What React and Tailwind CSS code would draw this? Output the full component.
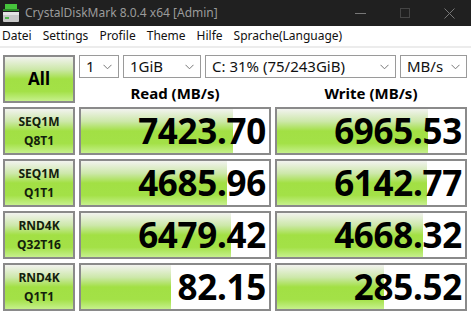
import React from 'react';

const rows = [
  { a: 'SEQ1M', b: 'Q8T1', read: 7423.7, write: 6965.53 },
  { a: 'SEQ1M', b: 'Q1T1', read: 4685.96, write: 6142.77 },
  { a: 'RND4K', b: 'Q32T16', read: 6479.42, write: 4668.32 },
  { a: 'RND4K', b: 'Q1T1', read: 82.15, write: 285.52 },
];

function barPct(v) {
  const f = 0.48 + 0.169 * (Math.log10(v) - 1.915);
  return Math.max(0, Math.min(1, f)) * 100;
}

const green =
  'bg-[linear-gradient(to_bottom,#f2f3ef_0%,#cde8aa_28%,#a2e044_50%,#a3e147_78%,#c6f08c_100%)]';

function Select({ value, className }) {
  return (
    <div className={`h-[23px] flex items-center justify-between border border-[#9a9a9a] bg-white pl-[6px] pr-[6px] text-[15px] text-[#111] leading-none ${className}`}>
      <span>{value}</span>
      <svg width="9" height="6" viewBox="0 0 9 6" className="text-[#777]">
        <path d="M0.5 0.8 L4.5 4.8 L8.5 0.8" fill="none" stroke="currentColor" strokeWidth="1" />
      </svg>
    </div>
  );
}

function Label({ a, b }) {
  return (
    <div className={`border-2 border-[#8a8a8a] ${green} flex flex-col items-center justify-center text-[12px] font-bold leading-[19px] text-[#13200c]`}>
      <span>{a}</span>
      <span>{b}</span>
    </div>
  );
}

function Value({ v }) {
  return (
    <div className="relative border-2 border-[#8a8a8a] bg-white overflow-hidden">
      <div className={`absolute left-0 top-0 bottom-0 ${green}`} style={{ width: `${barPct(v)}%` }} />
      <div className="relative h-full flex items-center justify-end pr-[3px] text-[35px] font-bold text-black tracking-[-0.3px]">
        {v.toFixed(2)}
      </div>
    </div>
  );
}

export default function App() {
  return (
    <div className="w-[471px] h-[315px] bg-white overflow-hidden flex flex-col" style={{ fontFamily: '"Noto Sans", "Open Sans", sans-serif' }}>
      {/* title bar */}
      <div className="h-[26px] bg-[#202020] flex items-center shrink-0">
        <svg width="16" height="18" viewBox="0 0 16 18" className="ml-[3px]">
          <rect x="2" y="0" width="12" height="5" fill="#46c43c" />
          <rect x="0" y="5" width="16" height="2" fill="#2e8a2a" />
          <rect x="0" y="8" width="16" height="10" rx="1" fill="#c8c8c8" />
          <rect x="0" y="8" width="16" height="3" fill="#e4e4e4" />
          <rect x="2" y="13" width="4" height="2" fill="#4fb84a" />
        </svg>
        <span className="ml-[6px] text-[12px] text-[#9b9b9b]">CrystalDiskMark 8.0.4 x64 [Admin]</span>
        <div className="ml-auto flex items-center">
          <div className="w-[46px] flex justify-center">
            <div className="w-[11px] h-px bg-[#777]" />
          </div>
          <div className="w-[44px] flex justify-center">
            <div className="w-[10px] h-[10px] border border-[#444]" />
          </div>
          <div className="w-[44px] flex justify-center">
            <svg width="11" height="11" viewBox="0 0 11 11">
              <path d="M0.5 0.5 L10.5 10.5 M10.5 0.5 L0.5 10.5" stroke="#777" strokeWidth="1" />
            </svg>
          </div>
        </div>
      </div>

      {/* menu */}
      <div className="h-[20px] flex items-center gap-[11px] pl-[2px] text-[12px] text-[#111] shrink-0">
        <span>Datei</span>
        <span>Settings</span>
        <span>Profile</span>
        <span>Theme</span>
        <span>Hilfe</span>
        <span>Sprache(Language)</span>
      </div>
      <div className="h-[2px] bg-[#ececec] shrink-0" />

      {/* main grid */}
      <div className="mt-[7px] ml-[3px] grid grid-cols-[72px_192px_192px] grid-rows-[48px_48px_48px_48px_48px] gap-x-[4px] gap-y-[4px]">
        <div className={`border-2 border-[#8a8a8a] ${green} flex items-center justify-center text-[17px] font-bold text-black`}>
          All
        </div>
        <div className="col-span-2 flex flex-col">
          <div className="flex gap-[4px]">
            <Select value="1" className="w-[40px]" />
            <Select value="1GiB" className="w-[78px]" />
            <Select value="C: 31% (75/243GiB)" className="w-[191px]" />
            <Select value="MB/s" className="w-[67px]" />
          </div>
          <div className="flex mt-[6px] text-[15px] font-bold text-black leading-[18px]">
            <div className="w-[192px] text-center">Read (MB/s)</div>
            <div className="w-[192px] ml-[4px] text-center">Write (MB/s)</div>
          </div>
        </div>
        {rows.map((r) => (
          <React.Fragment key={r.a + r.b}>
            <Label a={r.a} b={r.b} />
            <Value v={r.read} />
            <Value v={r.write} />
          </React.Fragment>
        ))}
      </div>
    </div>
  );
}
